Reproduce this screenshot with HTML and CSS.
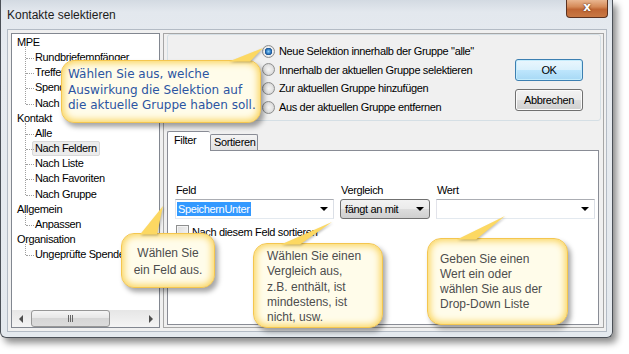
FILE: index.html
```html
<!DOCTYPE html>
<html lang="de">

<head>
    <meta charset="UTF-8">
    <title>Kontakte selektieren</title>
    <link rel="stylesheet" href="styles.css">
</head>

<body>
    <div class="window">
        <div class="titlebar">
            <span class="title">Kontakte selektieren</span>
            <span class="close-btn">x</span>
        </div>

        <div class="client">
            <!-- Baum links -->
            <div class="tree">
                <div class="tree-list">
                    <div class="parent">MPE</div>
                    <div class="group">
                        <div class="child">Rundbriefempfänger</div>
                        <div class="child">Treffen</div>
                        <div class="child">Spender</div>
                        <div class="child">Nach Gruppe</div>
                    </div>
                    <div class="parent">Kontakt</div>
                    <div class="group">
                        <div class="child">Alle</div>
                        <div class="child"><span class="selected">Nach Feldern</span></div>
                        <div class="child">Nach Liste</div>
                        <div class="child">Nach Favoriten</div>
                        <div class="child">Nach Gruppe</div>
                    </div>
                    <div class="parent">Allgemein</div>
                    <div class="group">
                        <div class="child">Anpassen</div>
                    </div>
                    <div class="parent">Organisation</div>
                    <div class="group">
                        <div class="child">Ungeprüfte Spender</div>
                    </div>
                </div>
                <div class="hscroll">
                    <span class="arrow arrow-left"></span>
                    <div class="track"><span class="thumb"></span></div>
                    <span class="arrow arrow-right"></span>
                </div>
            </div>

            <!-- Rechte Seite -->
            <div class="main">
                <div class="groupbox">
                    <div class="radios">
                        <div class="radio"><span class="dot checked"></span>Neue Selektion innerhalb der Gruppe "alle"</div>
                        <div class="radio"><span class="dot"></span>Innerhalb der aktuellen Gruppe selektieren</div>
                        <div class="radio"><span class="dot"></span>Zur aktuellen Gruppe hinzufügen</div>
                        <div class="radio"><span class="dot"></span>Aus der aktuellen Gruppe entfernen</div>
                    </div>
                    <div class="buttons">
                        <button class="btn btn-default">OK</button>
                        <button class="btn">Abbrechen</button>
                    </div>
                </div>

                <div class="tabs">
                    <div class="tab-strip">
                        <span class="tab tab-active">Filter</span>
                        <span class="tab">Sortieren</span>
                    </div>
                    <div class="tab-panel">
                        <div class="fields">
                            <div class="field">
                                <div class="label">Feld</div>
                                <div class="combo combo-edit"><span class="sel">SpeichernUnter</span><span class="caret"></span></div>
                            </div>
                            <div class="field">
                                <div class="label">Vergleich</div>
                                <div class="combo combo-list"><span>fängt an mit</span><span class="caret"></span></div>
                            </div>
                            <div class="field">
                                <div class="label">Wert</div>
                                <div class="combo combo-edit"><span></span><span class="caret"></span></div>
                            </div>
                        </div>
                        <div class="check"><span class="box"></span>Nach diesem Feld sortieren</div>
                    </div>
                </div>
            </div>
        </div>
    </div>

    <!-- Sprechblasen -->
    <div class="tip tip-1">Wählen Sie aus, welche<br>Auswirkung die Selektion auf<br>die aktuelle Gruppe haben soll.</div>
    <div class="tip tip-2">Wählen Sie<br>ein Feld aus.</div>
    <div class="tip tip-3">Wählen Sie einen<br>Vergleich aus,<br>z.B. enthält, ist<br>mindestens, ist<br>nicht, usw.</div>
    <div class="tip tip-4">Geben Sie einen<br>Wert ein oder<br>wählen Sie aus der<br>Drop-Down Liste</div>

    <svg class="pointers" width="629" height="354" viewBox="0 0 629 354">
        <polygon points="229,61.5 263,48 250,61.5" />
        <polygon points="140,234.5 163,206 157,234.5" />
        <polygon points="281,244.5 332,222 300,244.5" />
        <polygon points="457,239.5 505,216 476,239.5" />
    </svg>
</body>

</html>
```

FILE: styles.css
```css
body {
    margin: 0;
    width: 629px;
    height: 354px;
    background-color: #fff;
    font-family: "Liberation Sans", Arial, sans-serif;
    position: relative;
}

.window {
    width: 613px;
    height: 338px;
    box-sizing: border-box;
    display: flex;
    flex-direction: column;
    border: 1px solid #4b5057;
    border-top: none;
    border-radius: 0 0 6px 6px;
    background: linear-gradient(180deg, #d3dae2 0, #e3e8ee 12px, #e7ebf0 60px, #e4e9ee 100%);
    box-shadow: 4px 5px 7px rgba(0, 0, 0, 0.45);
}

.titlebar {
    height: 29px;
    display: flex;
    justify-content: space-between;
    align-items: flex-start;
}

.title {
    font-size: 12px;
    line-height: 16px;
    color: #1c1c1c;
    padding: 7px 0 0 6px;
}

.close-btn {
    width: 42px;
    height: 18px;
    box-sizing: border-box;
    margin-right: 4px;
    border: 1px solid #5b3220;
    border-top: none;
    border-radius: 0 0 4px 4px;
    background: linear-gradient(180deg, #e9b690 0, #d58a58 40%, #bf6634 55%, #c87844 100%);
    color: #fff;
    font-family: "DejaVu Sans", sans-serif;
    font-weight: bold;
    font-size: 12px;
    line-height: 15px;
    text-align: center;
    text-shadow: 0 0 2px #3a1a0a;
}

.client {
    flex: 1;
    display: flex;
    gap: 3px;
    margin: 0 5px 5px 6px;
    padding: 3px 2px 3px 3px;
    border: 1px solid #b3bbc5;
    background-color: #f0f0f0;
    font-size: 11px;
    letter-spacing: -0.35px;
    color: #000;
}

/* Baum */
.tree {
    width: 149px;
    box-sizing: border-box;
    display: flex;
    flex-direction: column;
    border: 1px solid #828790;
    background-color: #fff;
}

.tree-list {
    flex: 1;
    padding: 1px 0 0 5px;
    line-height: 15.15px;
    overflow: hidden;
    white-space: nowrap;
}

.group {
    position: relative;
    margin-left: 8px;
}

.group::before {
    content: "";
    position: absolute;
    left: 0;
    top: -3px;
    bottom: 7px;
    border-left: 1px dotted #a0a0a0;
}

.child {
    position: relative;
    padding-left: 10px;
}

.child::before {
    content: "";
    position: absolute;
    left: 1px;
    top: 8px;
    width: 8px;
    border-top: 1px dotted #a0a0a0;
}

.selected {
    display: inline-block;
    margin-left: -3px;
    padding: 0 2px;
    line-height: 13px;
    border: 1px solid #d9d9d9;
    border-radius: 2px;
    background-color: #ececec;
}

.hscroll {
    height: 17px;
    display: flex;
    background: linear-gradient(180deg, #e6e6e6, #f4f4f4);
}

.arrow {
    width: 17px;
    display: flex;
    align-items: center;
    justify-content: center;
}

.arrow::after {
    content: "";
    border-top: 4px solid transparent;
    border-bottom: 4px solid transparent;
}

.arrow-left::after {
    border-right: 4px solid #4d4d4d;
}

.arrow-right::after {
    border-left: 4px solid #4d4d4d;
}

.track {
    flex: 1;
    padding: 0 1px;
}

.thumb {
    display: block;
    width: 77px;
    height: 15px;
    margin-top: 0;
    margin-left: 1px;
    border: 1px solid #979797;
    border-radius: 3px;
    background:
        linear-gradient(90deg, #666 1px, transparent 1px, transparent 2px, #666 2px, #666 3px, transparent 3px, transparent 4px, #666 4px, #666 5px, transparent 5px) 36px 4px / 6px 7px no-repeat,
        linear-gradient(180deg, #f5f5f5, #e6e6e6 50%, #d6d6d6 50%, #dcdcdc);
}

/* Rechte Seite */
.main {
    flex: 1;
    display: flex;
    flex-direction: column;
    padding: 0 2px 2px 3px;
    border: 1px solid #a6a6a6;
}

.groupbox {
    height: 87px;
    box-sizing: border-box;
    display: flex;
    justify-content: space-between;
    border: 1px solid #d5dfe5;
    border-radius: 3px;
    padding: 7px 17px 0 94px;
}

.radio {
    display: flex;
    align-items: center;
    gap: 4px;
    height: 18.6px;
}

.dot {
    width: 13px;
    height: 13px;
    box-sizing: border-box;
    border: 1px solid #8e8f8f;
    border-radius: 50%;
    background: radial-gradient(circle, #f6f6f6 0, #e4e4e4 4px, #d2d2d2 6px);
}

.dot.checked {
    background: radial-gradient(circle, #8fd0f8 0, #2a75bd 2.5px, #1b4f8c 3.5px, #f2f2f2 4px, #dcdcdc 6px);
}

.buttons {
    display: flex;
    flex-direction: column;
    gap: 8px;
    padding-top: 17px;
}

.btn {
    width: 68px;
    height: 22px;
    padding: 0;
    font-family: "Liberation Sans", Arial, sans-serif;
    font-size: 11px;
    letter-spacing: -0.35px;
    color: #000;
    border: 1px solid #707070;
    border-radius: 3px;
    background: linear-gradient(180deg, #f2f2f2 0, #ebebeb 50%, #dddddd 50%, #cfcfcf 100%);
    box-shadow: inset 0 0 0 1px #fbfbfb;
}

.btn-default {
    border-color: #3c7fb1;
    background: linear-gradient(180deg, #eaf6fd 0, #d9f0fc 50%, #bee6fd 50%, #a7d9f5 100%);
    box-shadow: inset 0 0 0 1px #c5ecfc;
}

.tabs {
    flex: 1;
    display: flex;
    flex-direction: column;
    margin-top: 10px;
    margin-right: 2px;
}

.tab-strip {
    height: 20px;
    display: flex;
    align-items: flex-end;
    margin-bottom: -1px;
    position: relative;
    z-index: 1;
}

.tab {
    box-sizing: border-box;
    width: 48px;
    height: 16px;
    margin-bottom: 1px;
    padding-left: 3px;
    line-height: 15px;
    border: 1px solid #898c95;
    border-bottom: none;
    border-radius: 2px 2px 0 0;
    background: linear-gradient(180deg, #f4f4f4, #e2e2e2);
}

.tab-active {
    width: 43px;
    height: 20px;
    margin-bottom: 0;
    padding-left: 6px;
    line-height: 17px;
    border-right: none;
    background: #fff;
}

.tab-panel {
    flex: 1;
    padding: 32px 0 0 7px;
    border: 1px solid #898c95;
    background-color: #fff;
}

.fields {
    display: grid;
    grid-template-columns: 159px 90px 159px;
    column-gap: 6px;
}

.label {
    line-height: 14px;
    padding-left: 1px;
    margin-bottom: 2px;
}

.combo {
    height: 20px;
    box-sizing: border-box;
    display: flex;
    align-items: center;
    justify-content: space-between;
    padding: 0 5px 0 1px;
}

.combo-edit {
    border: 1px solid #abadb3;
    border-color: #abadb3 #dbdfe6 #e3e9ef #e2e3ea;
    background-color: #fff;
}

.combo-list {
    padding-left: 4px;
    border: 1px solid #707070;
    border-radius: 3px;
    background: linear-gradient(180deg, #f2f2f2 0, #ebebeb 50%, #dddddd 50%, #cfcfcf 100%);
}

.sel {
    padding: 1px 1px;
    background-color: #3399ff;
    color: #fff;
}

.caret {
    border-left: 4px solid transparent;
    border-right: 4px solid transparent;
    border-top: 4px solid #000;
}

.check {
    display: flex;
    align-items: center;
    gap: 3px;
    margin-top: 6px;
    padding-left: 1px;
}

.box {
    width: 13px;
    height: 13px;
    box-sizing: border-box;
    border: 1px solid #8e8f8f;
    background: linear-gradient(135deg, #dcdcdc, #f8f8f8);
    box-shadow: inset 0 0 0 1px #f4f4f4;
}

/* Sprechblasen */
.tip {
    position: absolute;
    box-sizing: border-box;
    border: 1px solid #f4c64f;
    border-radius: 13px;
    background-color: #fffcea;
    box-shadow: inset 0 0 7px 2px #fad45c, 3px 4px 5px rgba(0, 0, 0, 0.35);
    font-size: 12px;
    color: #4d4d4d;
    white-space: nowrap;
}

.tip-1 {
    left: 61px;
    top: 60px;
    width: 200px;
    height: 63px;
    padding: 6px 0 0 6px;
    font-family: "DejaVu Sans", Verdana, sans-serif;
    line-height: 15.5px;
    color: #2c55a2;
}

.tip-2 {
    left: 121px;
    top: 233px;
    width: 94px;
    height: 55px;
    padding-top: 11px;
    line-height: 17px;
    text-align: center;
}

.tip-3 {
    left: 253px;
    top: 243px;
    width: 130px;
    height: 85px;
    padding: 5px 0 0 13px;
    line-height: 15.25px;
    border-radius: 14px;
}

.tip-4 {
    left: 427px;
    top: 238px;
    width: 141px;
    height: 87px;
    padding: 13px 0 0 12px;
    line-height: 15px;
    border-radius: 14px;
}

.pointers {
    position: absolute;
    left: 0;
    top: 0;
    pointer-events: none;
}

.pointers polygon {
    fill: #fcd862;
    filter: drop-shadow(1px 1px 1px rgba(0, 0, 0, 0.25));
}
```
